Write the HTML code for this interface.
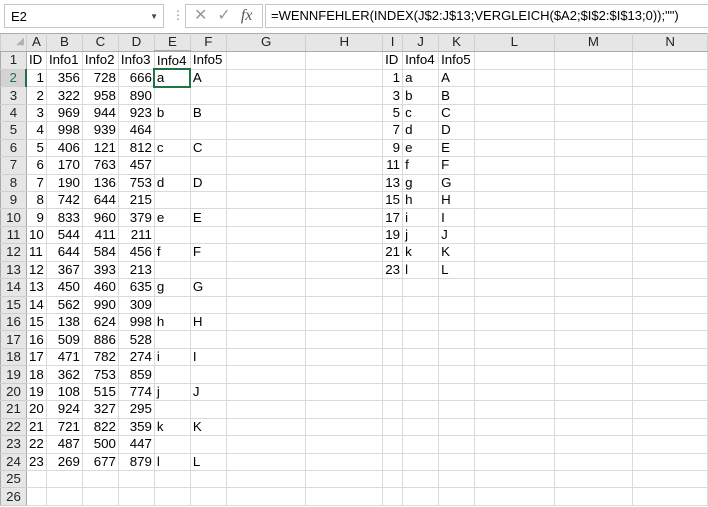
<!DOCTYPE html><html><head><style>
body{margin:0;width:708px;height:507px;overflow:hidden;background:#fff;font-family:"Liberation Sans",sans-serif;position:relative}
.top{position:absolute;left:0;top:0;width:708px;height:34px;background:#fff}
.nb{position:absolute;left:4px;top:4px;width:160px;height:24px;border:1px solid #c6c6c6;font-size:13px;line-height:24px;box-sizing:border-box;padding-left:6px}
.nb span{position:absolute;right:5px;top:0;font-size:8px;color:#444}
.fx{position:absolute;left:185px;top:4px;width:78px;height:24px;border:1px solid #c6c6c6;box-sizing:border-box;color:#999;font-size:16px;line-height:22px}
.fb{position:absolute;left:265px;top:4px;width:443px;height:24px;border:1px solid #c6c6c6;border-right:none;box-sizing:border-box;font-size:13px;line-height:22px;padding-left:5px;white-space:nowrap}
table{position:absolute;left:0;top:33px;border-collapse:collapse;table-layout:fixed;font-size:13.3px}
td{border:1px solid #dadada;height:16.45px;padding:0 2px;white-space:nowrap;overflow:hidden;line-height:16px}
tr.h td{background:#e6e6e6;text-align:center;border-color:#ababab #cfcfcf;color:#222}
td.r{background:#e6e6e6;text-align:center;color:#222;border-color:#cfcfcf #ababab}
.n{text-align:right}
td.sel{background:#d3d3d3;color:#217346;border-bottom:2px solid #217346}
td.rsel{background:#d3d3d3;color:#217346;border-right:2px solid #217346}
td.cur{outline:2px solid #217346;outline-offset:-1px}
</style></head><body>
<div class="top">
<div class="nb">E2<span>▼</span></div>
<div style="position:absolute;left:172px;top:8px;color:#888;font-size:12px">⋮</div>
<div class="fx"><span style="margin-left:8px">✕</span><span style="margin-left:10px">✓</span><i style="margin-left:10px;font-family:'Liberation Serif';color:#555">fx</i></div>
<div class="fb">=WENNFEHLER(INDEX(J$2:J$13;VERGLEICH($A2;$I$2:$I$13;0));"")</div>
</div>
<table>
<colgroup><col style="width:26px"><col style="width:20px"><col style="width:36px"><col style="width:36px"><col style="width:36px"><col style="width:36px"><col style="width:36px"><col style="width:80px"><col style="width:77px"><col style="width:20px"><col style="width:36px"><col style="width:36px"><col style="width:80px"><col style="width:79px"><col style="width:75px"></colgroup>
<tr class="h"><td style="background:#e6e6e6"><span style="color:#b0b0b0;font-size:10px;float:right">◢</span></td><td>A</td><td>B</td><td>C</td><td>D</td><td class="sel">E</td><td>F</td><td>G</td><td>H</td><td>I</td><td>J</td><td>K</td><td>L</td><td>M</td><td>N</td></tr>
<tr><td class="r">1</td><td>ID</td><td>Info1</td><td>Info2</td><td>Info3</td><td>Info4</td><td>Info5</td><td></td><td></td><td>ID</td><td>Info4</td><td>Info5</td><td></td><td></td><td></td></tr>
<tr><td class="r rsel">2</td><td class="n">1</td><td class="n">356</td><td class="n">728</td><td class="n">666</td><td class="cur">a</td><td>A</td><td></td><td></td><td class="n">1</td><td>a</td><td>A</td><td></td><td></td><td></td></tr>
<tr><td class="r">3</td><td class="n">2</td><td class="n">322</td><td class="n">958</td><td class="n">890</td><td></td><td></td><td></td><td></td><td class="n">3</td><td>b</td><td>B</td><td></td><td></td><td></td></tr>
<tr><td class="r">4</td><td class="n">3</td><td class="n">969</td><td class="n">944</td><td class="n">923</td><td>b</td><td>B</td><td></td><td></td><td class="n">5</td><td>c</td><td>C</td><td></td><td></td><td></td></tr>
<tr><td class="r">5</td><td class="n">4</td><td class="n">998</td><td class="n">939</td><td class="n">464</td><td></td><td></td><td></td><td></td><td class="n">7</td><td>d</td><td>D</td><td></td><td></td><td></td></tr>
<tr><td class="r">6</td><td class="n">5</td><td class="n">406</td><td class="n">121</td><td class="n">812</td><td>c</td><td>C</td><td></td><td></td><td class="n">9</td><td>e</td><td>E</td><td></td><td></td><td></td></tr>
<tr><td class="r">7</td><td class="n">6</td><td class="n">170</td><td class="n">763</td><td class="n">457</td><td></td><td></td><td></td><td></td><td class="n">11</td><td>f</td><td>F</td><td></td><td></td><td></td></tr>
<tr><td class="r">8</td><td class="n">7</td><td class="n">190</td><td class="n">136</td><td class="n">753</td><td>d</td><td>D</td><td></td><td></td><td class="n">13</td><td>g</td><td>G</td><td></td><td></td><td></td></tr>
<tr><td class="r">9</td><td class="n">8</td><td class="n">742</td><td class="n">644</td><td class="n">215</td><td></td><td></td><td></td><td></td><td class="n">15</td><td>h</td><td>H</td><td></td><td></td><td></td></tr>
<tr><td class="r">10</td><td class="n">9</td><td class="n">833</td><td class="n">960</td><td class="n">379</td><td>e</td><td>E</td><td></td><td></td><td class="n">17</td><td>i</td><td>I</td><td></td><td></td><td></td></tr>
<tr><td class="r">11</td><td>10</td><td class="n">544</td><td class="n">411</td><td class="n">211</td><td></td><td></td><td></td><td></td><td class="n">19</td><td>j</td><td>J</td><td></td><td></td><td></td></tr>
<tr><td class="r">12</td><td>11</td><td class="n">644</td><td class="n">584</td><td class="n">456</td><td>f</td><td>F</td><td></td><td></td><td class="n">21</td><td>k</td><td>K</td><td></td><td></td><td></td></tr>
<tr><td class="r">13</td><td>12</td><td class="n">367</td><td class="n">393</td><td class="n">213</td><td></td><td></td><td></td><td></td><td class="n">23</td><td>l</td><td>L</td><td></td><td></td><td></td></tr>
<tr><td class="r">14</td><td>13</td><td class="n">450</td><td class="n">460</td><td class="n">635</td><td>g</td><td>G</td><td></td><td></td><td></td><td></td><td></td><td></td><td></td><td></td></tr>
<tr><td class="r">15</td><td>14</td><td class="n">562</td><td class="n">990</td><td class="n">309</td><td></td><td></td><td></td><td></td><td></td><td></td><td></td><td></td><td></td><td></td></tr>
<tr><td class="r">16</td><td>15</td><td class="n">138</td><td class="n">624</td><td class="n">998</td><td>h</td><td>H</td><td></td><td></td><td></td><td></td><td></td><td></td><td></td><td></td></tr>
<tr><td class="r">17</td><td>16</td><td class="n">509</td><td class="n">886</td><td class="n">528</td><td></td><td></td><td></td><td></td><td></td><td></td><td></td><td></td><td></td><td></td></tr>
<tr><td class="r">18</td><td>17</td><td class="n">471</td><td class="n">782</td><td class="n">274</td><td>i</td><td>I</td><td></td><td></td><td></td><td></td><td></td><td></td><td></td><td></td></tr>
<tr><td class="r">19</td><td>18</td><td class="n">362</td><td class="n">753</td><td class="n">859</td><td></td><td></td><td></td><td></td><td></td><td></td><td></td><td></td><td></td><td></td></tr>
<tr><td class="r">20</td><td>19</td><td class="n">108</td><td class="n">515</td><td class="n">774</td><td>j</td><td>J</td><td></td><td></td><td></td><td></td><td></td><td></td><td></td><td></td></tr>
<tr><td class="r">21</td><td>20</td><td class="n">924</td><td class="n">327</td><td class="n">295</td><td></td><td></td><td></td><td></td><td></td><td></td><td></td><td></td><td></td><td></td></tr>
<tr><td class="r">22</td><td>21</td><td class="n">721</td><td class="n">822</td><td class="n">359</td><td>k</td><td>K</td><td></td><td></td><td></td><td></td><td></td><td></td><td></td><td></td></tr>
<tr><td class="r">23</td><td>22</td><td class="n">487</td><td class="n">500</td><td class="n">447</td><td></td><td></td><td></td><td></td><td></td><td></td><td></td><td></td><td></td><td></td></tr>
<tr><td class="r">24</td><td>23</td><td class="n">269</td><td class="n">677</td><td class="n">879</td><td>l</td><td>L</td><td></td><td></td><td></td><td></td><td></td><td></td><td></td><td></td></tr>
<tr><td class="r">25</td><td></td><td></td><td></td><td></td><td></td><td></td><td></td><td></td><td></td><td></td><td></td><td></td><td></td><td></td></tr>
<tr><td class="r">26</td><td></td><td></td><td></td><td></td><td></td><td></td><td></td><td></td><td></td><td></td><td></td><td></td><td></td><td></td></tr>
</table>
</body></html>
